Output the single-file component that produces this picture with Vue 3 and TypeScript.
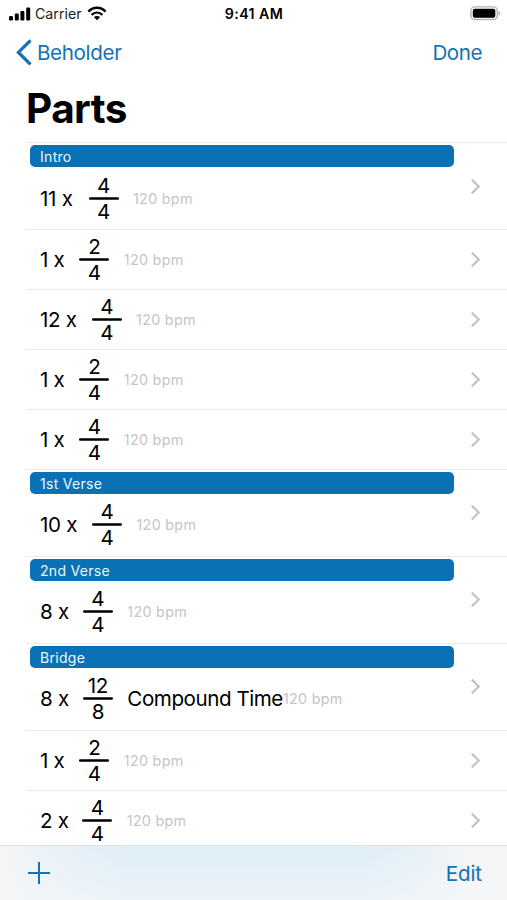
<script setup lang="ts">
interface Part {
  count: number
  beats: number
  unit: number
  bpm: number
  section?: string
  note?: string
}

const parts: Part[] = [
  { section: 'Intro', count: 11, beats: 4, unit: 4, bpm: 120 },
  { count: 1, beats: 2, unit: 4, bpm: 120 },
  { count: 12, beats: 4, unit: 4, bpm: 120 },
  { count: 1, beats: 2, unit: 4, bpm: 120 },
  { count: 1, beats: 4, unit: 4, bpm: 120 },
  { section: '1st Verse', count: 10, beats: 4, unit: 4, bpm: 120 },
  { section: '2nd Verse', count: 8, beats: 4, unit: 4, bpm: 120 },
  { section: 'Bridge', count: 8, beats: 12, unit: 8, bpm: 120, note: 'Compound Time' },
  { count: 1, beats: 2, unit: 4, bpm: 120 },
  { count: 2, beats: 4, unit: 4, bpm: 120 },
]

// Advance width of each repeat count, so the time signatures line up per count.
const countWidths: Record<number, number> = { 1: 24.3, 2: 27.2, 8: 27.8, 10: 37, 11: 33.5, 12: 36.6 }
</script>

<template>
  <div class="screen">
    <header class="status">
      <div class="carrier">
        <svg class="signal" width="22" height="14" viewBox="0 0 22 14">
          <rect x="0" y="9" width="4" height="4.4" rx="1.2" />
          <rect x="5.8" y="6.6" width="4" height="6.8" rx="1.2" />
          <rect x="11.4" y="3.9" width="4" height="9.5" rx="1.2" />
          <rect x="17.2" y="0.6" width="4" height="12.8" rx="1.2" />
        </svg>
        <span class="carrier-name">Carrier</span>
        <svg class="wifi" width="20" height="15" viewBox="0 0 20 15">
          <path d="M1.4 5.6C6.4 .5 13.6 .5 18.6 5.6" fill="none" stroke="#000" stroke-width="2.4" />
          <path d="M4.6 8.9C7.8 5.8 12.2 5.8 15.4 8.9" fill="none" stroke="#000" stroke-width="2.3" />
          <path d="M10 14.2 6.8 11.1C8.6 9.5 11.4 9.5 13.2 11.1Z" />
        </svg>
      </div>
      <span class="time">9:41 AM</span>
      <svg class="battery" width="31" height="15" viewBox="0 0 31 15">
        <rect x="0.9" y="0.9" width="26.4" height="12.6" rx="3.8" fill="#fff" stroke="#b5b5b5" stroke-width="1.4" />
        <rect x="2.8" y="2.7" width="22.5" height="9" rx="2" />
        <path d="M28.6 5v4.6c2.1-.9 2.1-3.7 0-4.6Z" fill="#b0b0b0" />
      </svg>
    </header>

    <nav class="nav">
      <a class="back">
        <svg width="16" height="27" viewBox="0 0 16 27">
          <path d="M14.5 1.4 2.4 13.4 14.5 25.4" fill="none" stroke="currentColor" stroke-width="3.2" />
        </svg>
        <span class="back-label">Beholder</span>
      </a>
      <a class="done">Done</a>
    </nav>

    <h1 class="title">Parts</h1>

    <ul class="list">
      <li v-for="(part, i) in parts" :key="i" class="row" :class="{ sectioned: part.section }">
        <div class="content">
          <div v-if="part.section" class="section">{{ part.section }}</div>
          <div class="measure">
            <span class="count" :style="{ width: countWidths[part.count] + 'px' }">{{ part.count }} x</span>
            <span class="signature">
              <span class="beats">{{ part.beats }}</span>
              <svg class="bar" width="30" height="3" viewBox="0 0 30 3">
                <path d="M1.2 1.5H28.8" stroke="#000" stroke-width="2.4" stroke-linecap="round" />
              </svg>
              <span class="unit">{{ part.unit }}</span>
            </span>
            <span v-if="part.note" class="note">{{ part.note }}</span>
            <span class="bpm">{{ part.bpm }} bpm</span>
          </div>
        </div>
        <svg class="chevron" width="11" height="17" viewBox="0 0 11 17">
          <path d="M1.8 1.6 8.7 8.5 1.8 15.4" fill="none" stroke="#c3c3c6" stroke-width="2.2" />
        </svg>
      </li>
    </ul>

    <footer class="toolbar">
      <svg width="22" height="22" viewBox="0 0 22 22">
        <path d="M11 0V22M0 11H22" stroke="currentColor" stroke-width="2" />
      </svg>
      <a class="edit">Edit</a>
    </footer>
  </div>
</template>

<style>
body {
  margin: 0;
  background: #fff;
}
</style>

<style scoped>
.screen {
  display: flex;
  flex-direction: column;
  width: 507px;
  height: 900px;
  overflow: hidden;
  background: #fff;
  color: #000;
  font-family: Inter, "Liberation Sans", sans-serif;
  font-size: 20.6px;
  letter-spacing: -0.45px;
}

.status {
  display: grid;
  grid-template-columns: 1fr auto 1fr;
  align-items: center;
  height: 27px;
  padding: 0 6px 0 9px;
  box-sizing: border-box;
  flex: none;
}

.carrier {
  display: flex;
  align-items: center;
}

.carrier-name {
  width: 47px;
  margin: 0 5px 0 4px;
  font-size: 14.2px;
  letter-spacing: 0;
  color: #222;
}

.time {
  margin-right: 2px;
  font-size: 14.2px;
  font-weight: 600;
  letter-spacing: 0.4px;
}

.battery {
  justify-self: end;
}

.nav {
  display: flex;
  align-items: center;
  justify-content: space-between;
  height: 51px;
  padding: 0 25px 0 16px;
  flex: none;
  color: #1273b7;
}

.back {
  display: flex;
  align-items: center;
  gap: 5px;
  letter-spacing: -0.35px;
}

.title {
  flex: none;
  height: 64px;
  margin: 0;
  padding-left: 26px;
  line-height: 62px;
  font-size: 40.5px;
  font-weight: 700;
  letter-spacing: -0.6px;
}

.list {
  flex: 1;
  min-height: 0;
  overflow: hidden;
  margin: 0;
  padding: 0 0 0 26px;
  list-style: none;
}

.row {
  display: flex;
  align-items: center;
  height: 59.85px;
  box-sizing: border-box;
  border-top: 1px solid #ebebed;
}

.row.sectioned {
  height: 87.15px;
}

.content {
  width: 428px;
  height: 100%;
  display: flex;
  flex-direction: column;
}

.section {
  flex: none;
  height: 22.4px;
  margin: 2.1px 0 0 4px;
  padding-left: 10px;
  border-radius: 5px;
  background: #0a71b4;
  color: #eef7fd;
  font-size: 14px;
  line-height: 23.5px;
  letter-spacing: 0.3px;
}

.measure {
  flex: 1;
  display: flex;
  align-items: center;
  padding: 0.6px 0 0 14px;
  white-space: nowrap;
}

.sectioned .measure {
  padding: 0 0 0.6px 14px;
}

.count {
  flex: none;
  margin-right: 15px;
  letter-spacing: -0.3px;
}

.signature {
  display: flex;
  flex-direction: column;
  align-items: center;
  flex: none;
  width: 30px;
  margin-right: 14.5px;
  line-height: 23px;
}

.bar {
  display: block;
}

.bpm {
  color: #c5c5c7;
  font-size: 14.3px;
  letter-spacing: 0.3px;
}

.chevron {
  margin-left: 16px;
}

.toolbar {
  flex: none;
  display: flex;
  align-items: center;
  justify-content: space-between;
  height: 55px;
  padding: 0 25px 0 28px;
  box-sizing: border-box;
  border-top: 1px solid #dbe2e7;
  background:
    linear-gradient(to bottom, rgba(245, 247, 249, 0), rgba(245, 247, 249, 0.6)),
    linear-gradient(to right, #f4f5f6 0, #e6f0f7 70px, #deedf7 130px, #deedf7 360px, #e6f0f7 415px, #f4f5f6 470px);
  color: #1273b7;
}

.edit {
  letter-spacing: -0.1px;
}
</style>
